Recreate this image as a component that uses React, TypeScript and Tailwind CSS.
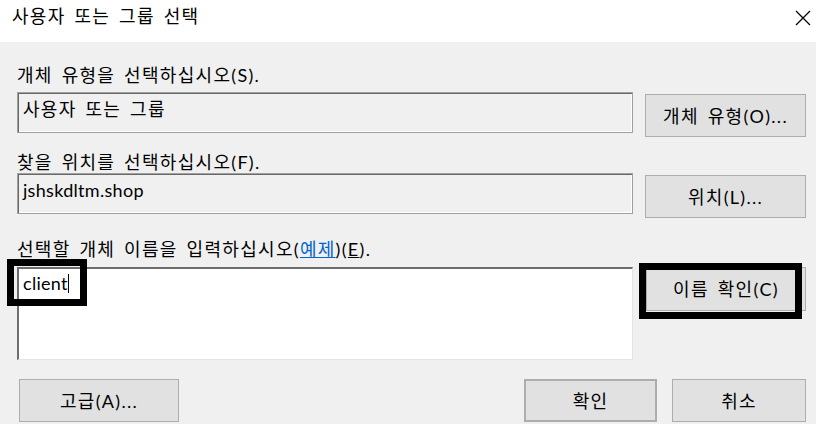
const font = "font-['Lato','Noto_Sans_CJK_KR',sans-serif] text-[18px] tracking-[1.3px] [word-spacing:3px] text-black";

function WinButton({ label, className = '' }: { label: string; className?: string }) {
  return (
    <div
      className={`flex items-center justify-center bg-[#e1e1e1] border border-[#adadad] leading-[22px] ${className}`}
    >
      {label}
    </div>
  );
}

function ReadOnlyBox({ value, className = '' }: { value: string; className?: string }) {
  return (
    <div
      className={`w-[616px] h-[41px] border border-[#a0a0a0] bg-[#f0f0f0] shadow-[inset_1px_1px_0_#696969,inset_-1px_-1px_0_#ffffff] pl-[5px] pt-[5px] leading-[22px] ${className}`}
    >
      {value}
    </div>
  );
}

export default function App() {
  return (
    <div className={`relative w-[816px] h-[424px] overflow-hidden bg-[#f0f0f0] ${font}`}>
      {/* Title bar */}
      <div className="h-[42px] bg-white flex items-start">
        <span className="pl-[12px] pt-[4px] leading-[24px]">사용자 또는 그룹 선택</span>
        <svg className="ml-auto mr-[5px] mt-[10px]" width="16" height="16" viewBox="0 0 16 16">
          <path d="M1 1 L15 15 M15 1 L1 15" stroke="#000" strokeWidth="1.3" fill="none" />
        </svg>
      </div>

      <div className="pl-[17px] pr-[10px]">
        <div className="mt-[22px] leading-[22px]">개체 유형을 선택하십시오(S).</div>
        <div className="mt-[6px] flex items-start">
          <ReadOnlyBox value="사용자 또는 그룹" />
          <WinButton label="개체 유형(O)..." className="ml-[12px] mt-[2px] w-[161px] h-[43px]" />
        </div>

        <div className="mt-[14px] leading-[22px]">찾을 위치를 선택하십시오(F).</div>
        <div className="flex items-start">
          <ReadOnlyBox value="jshskdltm.shop" className="tracking-[0.3px]" />
          <WinButton label="위치(L)..." className="ml-[12px] mt-[2px] w-[161px] h-[43px]" />
        </div>

        <div className="mt-[20px] leading-[22px]">
          선택할 개체 이름을 입력하십시오(<span className="text-[#0066cc] underline">예제</span>)(<span className="underline">E</span>).
        </div>
        <div className="mt-[7px] flex items-start">
          <div className="w-[616px] h-[93px] bg-white border-t-2 border-l-2 border-r border-b border-t-[#6d6d6d] border-l-[#6d6d6d] border-r-[#e3e3e3] border-b-[#e3e3e3] pl-[4px] pt-[3px] leading-[22px] tracking-[0.3px] flex items-start">
            <span>client</span>
            <span className="w-px h-[19px] bg-black mt-[2px]" />
          </div>
          <WinButton label="이름 확인(C)" className="ml-[13px] w-[160px] h-[44px]" />
        </div>

        <div className="mt-[19px] flex items-start">
          <WinButton label="고급(A)..." className="ml-[2px] w-[160px] h-[43px]" />
          <WinButton label="확인" className="ml-auto w-[133px] h-[43px] border-2 border-[#0078d7]" />
          <WinButton label="취소" className="ml-[15px] w-[134px] h-[43px]" />
        </div>
      </div>

      {/* Highlight rectangles drawn over the dialog */}
      <div className="absolute left-[7px] top-[259px] w-[80px] h-[47px] border-[7px] border-black" />
      <div className="absolute left-[639px] top-[263px] w-[163px] h-[56px] border-[7px] border-black" />
    </div>
  );
}
